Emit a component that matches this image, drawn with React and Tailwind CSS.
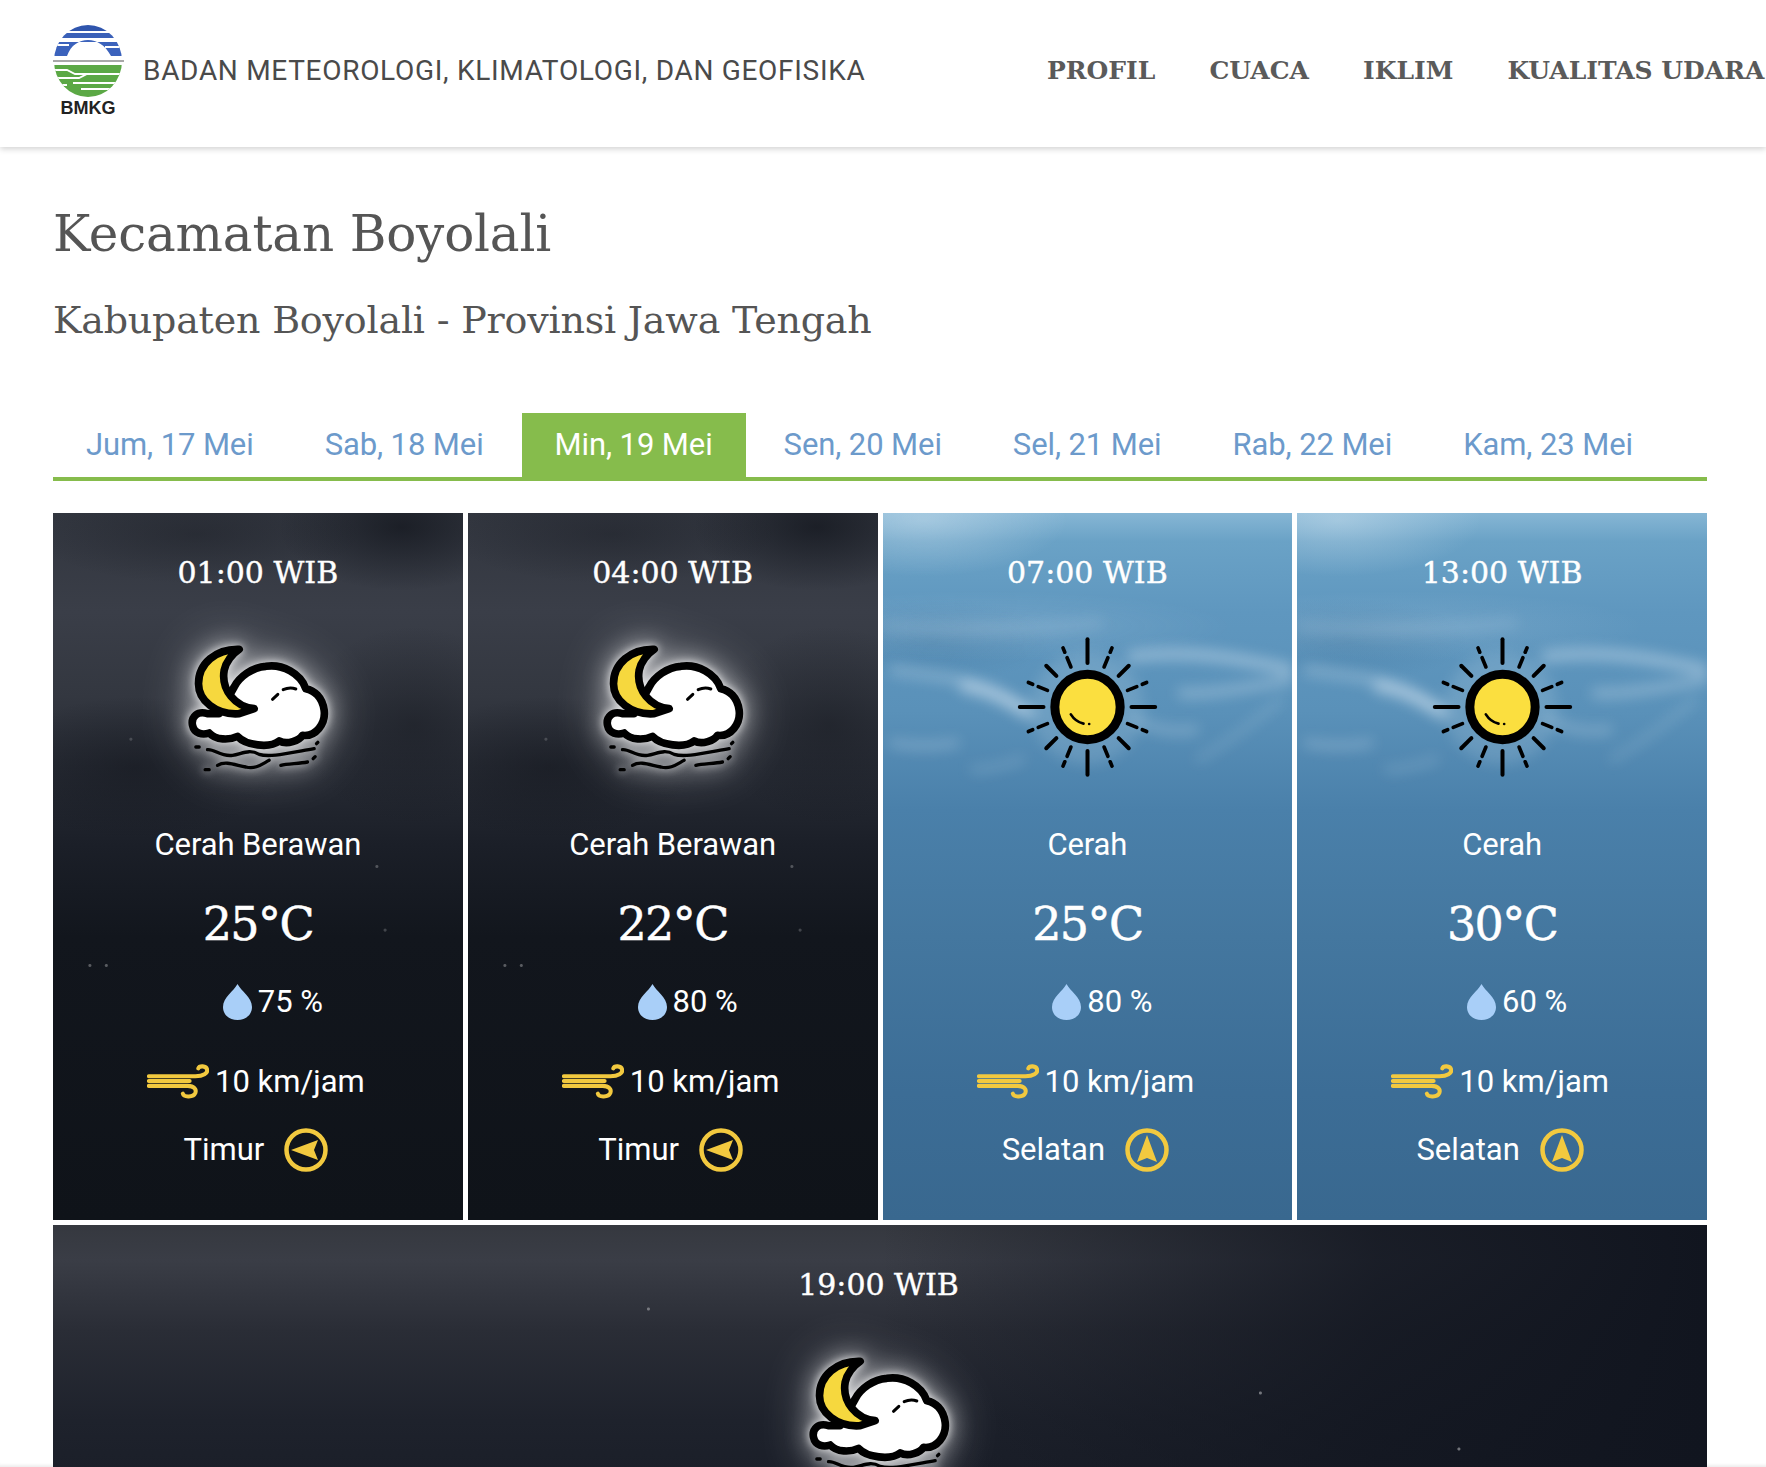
import React from 'react';

const slab = "font-['DejaVu_Serif',serif]";

const days = ['Jum, 17 Mei', 'Sab, 18 Mei', 'Min, 19 Mei', 'Sen, 20 Mei', 'Sel, 21 Mei', 'Rab, 22 Mei', 'Kam, 23 Mei'];

const forecasts = [
  { time: '01:00 WIB', night: true, label: 'Cerah Berawan', temp: '25°C', hum: '75 %', dir: 'Timur' },
  { time: '04:00 WIB', night: true, label: 'Cerah Berawan', temp: '22°C', hum: '80 %', dir: 'Timur' },
  { time: '07:00 WIB', night: false, label: 'Cerah', temp: '25°C', hum: '80 %', dir: 'Selatan' },
  { time: '13:00 WIB', night: false, label: 'Cerah', temp: '30°C', hum: '60 %', dir: 'Selatan' },
];

const nightBg =
  'bg-[radial-gradient(ellipse_30%_9%_at_85%_2%,rgba(12,15,22,0.6),transparent),radial-gradient(ellipse_40%_7%_at_35%_3%,rgba(20,23,30,0.35),transparent),radial-gradient(ellipse_28%_14%_at_88%_30%,rgba(20,23,30,0.45),transparent),radial-gradient(ellipse_35%_10%_at_20%_36%,rgba(18,21,28,0.5),transparent),radial-gradient(circle_at_9%_64%,rgba(255,255,255,0.3)_1px,transparent_2px),radial-gradient(circle_at_13%_64%,rgba(255,255,255,0.3)_1px,transparent_2px),radial-gradient(circle_at_79%_50%,rgba(255,255,255,0.25)_1px,transparent_2px),radial-gradient(circle_at_81%_59%,rgba(255,255,255,0.2)_1px,transparent_2px),radial-gradient(circle_at_19%_32%,rgba(255,255,255,0.25)_1px,transparent_2px),linear-gradient(180deg,#32363f_0%,#3a3e48_14%,#333740_26%,#272b34_36%,#1b1f28_47%,#12161d_60%,#0f1319_100%)]';
const dayBg =
  'bg-[radial-gradient(ellipse_35%_8%_at_10%_1%,rgba(220,235,245,0.4),transparent),radial-gradient(ellipse_60%_5%_at_25%_16%,rgba(220,235,245,0.14),transparent),radial-gradient(ellipse_30%_6%_at_12%_18%,rgba(40,90,130,0.2),transparent),linear-gradient(180deg,#86b6d4_0%,#6aa2c6_4%,#5f97bf_14%,#5a91b9_28%,#4a80aa_42%,#44779f_60%,#3c6d96_82%,#39688f_100%)]';

function Logo() {
  return (
    <svg viewBox="0 0 72 96" className="w-[72px] h-[96px] shrink-0">
      <defs>
        <clipPath id="globe">
          <ellipse cx="35" cy="38" rx="34" ry="36" />
        </clipPath>
      </defs>
      <g clipPath="url(#globe)">
        <rect x="0" y="2" width="72" height="6" fill="#2f55ad" />
        <rect x="0" y="10" width="72" height="5" fill="#3a60b8" />
        <path d="M0 19h72v14H58C52 22 44 17 35 17S18 22 14 33H0z" fill="#3b62bc" />
        <rect x="0" y="21" width="16" height="2" fill="#fff" />
        <rect x="52" y="23" width="20" height="2" fill="#fff" />
        <rect x="0" y="42" width="72" height="32" fill="#5ba845" />
        <path d="M0 47h14l8 4h50M0 55h26l8-4M20 60h52M28 66h44M0 62h14" stroke="#fff" strokeWidth="1.8" fill="none" />
      </g>
      <rect x="0" y="37" width="71" height="2" fill="#a8a8a8" />
      <text x="35" y="91" textAnchor="middle" fontFamily="Liberation Sans, sans-serif" fontWeight="700" fontSize="18" fill="#222">BMKG</text>
    </svg>
  );
}

// cirrus streaks behind the sun
function Wisps() {
  return (
    <svg viewBox="0 0 1236 1080" preserveAspectRatio="none" className="absolute left-0 top-0 w-full h-[360px] [filter:blur(7px)]" fill="none" stroke="#e4f0f8" strokeLinecap="round">
      <path d="M30 470C150 490 300 490 420 590" strokeWidth="26" opacity="0.32" />
      <path d="M250 520C320 530 380 560 440 600" strokeWidth="40" opacity="0.45" />
      <path d="M750 430C900 410 1050 430 1230 470" strokeWidth="30" opacity="0.45" />
      <path d="M900 540C1000 545 1120 520 1230 500" strokeWidth="24" opacity="0.38" />
      <path d="M950 740C1050 680 1130 620 1200 560" strokeWidth="16" opacity="0.22" />
      <path d="M760 620C820 650 880 660 940 650" strokeWidth="28" opacity="0.25" />
      <path d="M30 690C90 700 160 700 220 690" strokeWidth="22" opacity="0.3" />
      <path d="M270 770C320 770 370 755 420 740" strokeWidth="16" opacity="0.25" />
      <path d="M0 340C200 360 450 350 650 330" strokeWidth="36" opacity="0.12" />
      <circle cx="616" cy="585" r="170" fill="#e4f0f8" stroke="none" opacity="0.14" />
    </svg>
  );
}

function MoonCloud() {
  return (
    <svg viewBox="420 410 470 420" className="w-[157px] h-[140px] [filter:drop-shadow(0_0_4px_rgba(255,255,255,0.8))_drop-shadow(0_0_12px_rgba(255,255,255,0.55))_drop-shadow(0_0_24px_rgba(255,255,255,0.35))]">
      <path
        d="M505 640C475 630 455 650 460 675C465 700 490 705 510 698C530 720 570 720 595 708C620 735 690 745 720 722C745 735 780 720 790 705C830 710 860 670 855 630C850 590 825 570 800 565C785 520 730 490 680 498C640 500 600 530 585 560L540 640Z"
        fill="#fff"
        stroke="#000"
        strokeWidth="23"
        strokeLinejoin="round"
      />
      <path
        d="M600 447C530 445 478 490 478 550C478 600 530 645 600 640L645 625C590 620 545 570 555 510C560 485 580 460 600 447Z"
        fill="#f6d83e"
        stroke="#000"
        strokeWidth="23"
        strokeLinejoin="round"
      />
      <path d="M700 597L716 582M732 568C745 562 760 562 770 566" fill="none" stroke="#000" strokeWidth="9" strokeLinecap="round" />
      <g fill="none" stroke="#000" strokeWidth="10" strokeLinecap="round">
        <path d="M505 748C525 745 545 770 580 765C610 760 630 745 660 762C690 772 740 760 825 745" />
        <path d="M535 795C560 780 590 795 620 800C650 808 670 790 690 780M725 795C745 790 780 790 805 785" />
        <path d="M470 740h10M498 808h12M822 775l6-6M832 730l4-4" />
      </g>
    </svg>
  );
}

function Sun() {
  const rays = [];
  for (let i = 0; i < 16; i++) {
    const a = (i * Math.PI) / 8;
    const c = Math.cos(a);
    const s = Math.sin(a);
    const seg = (r1, r2, w) => (
      <line key={i + '-' + r1} x1={c * r1} y1={s * r1} x2={c * r2} y2={s * r2} stroke="#000" strokeWidth={w} strokeLinecap="round" />
    );
    if (i % 4 === 0) rays.push(seg(132, 203, 12));
    else if (i % 2 === 0) rays.push(seg(132, 175, 12));
    else {
      rays.push(seg(130, 160, 11));
      rays.push(seg(178, 192, 11));
    }
  }
  return (
    <svg viewBox="-235 -210 470 420" className="w-[157px] h-[140px]">
      {rays}
      <circle cx="0" cy="0" r="98" fill="#fbdf3f" stroke="#000" strokeWidth="27" />
      <path d="M-50 22C-40 38 -28 46 -12 50" fill="none" stroke="#000" strokeWidth="8" strokeLinecap="round" />
      <circle cx="5" cy="51" r="4" fill="#000" />
    </svg>
  );
}

function Drop() {
  return (
    <svg viewBox="0 0 29 36" className="w-[29px] h-[36px] shrink-0">
      <path d="M14.5 0C11 7 0 13 0 23C0 31 6.5 36 14.5 36S29 31 29 23C29 13 18 7 14.5 0Z" fill="#a9cff8" />
    </svg>
  );
}

function Wind() {
  return (
    <svg viewBox="0 0 64 36" className="w-[62px] h-[36px] shrink-0" fill="none" stroke="#f2c93f" strokeWidth="4.2" strokeLinecap="round">
      <path d="M2 12H50C58 12 63 9 62 5C61 1 54 1 53 4" />
      <path d="M2 17H44" />
      <path d="M2 22H42C49 22 51 26 50 29C48 34 38 34 37 30" />
    </svg>
  );
}

function Compass({ dir }) {
  return (
    <svg viewBox="0 0 44 44" className="w-[44px] h-[44px] shrink-0">
      <circle cx="22" cy="22" r="19.5" fill="none" stroke="#f2c93f" strokeWidth="4.5" />
      <path d="M22 7L32 34L22 30L12 34Z" fill="#f2c93f" transform={dir === 'Timur' ? 'rotate(-90 22 22)' : undefined} />
    </svg>
  );
}

function Card({ f }) {
  return (
    <div className={`relative h-[707px] overflow-hidden text-white ${f.night ? nightBg : dayBg}`}>
      {!f.night && <Wisps />}
      <div className="relative flex flex-col items-center">
        <div className={`${slab} text-[30px] [-webkit-text-stroke:0.4px_white] leading-[40px] mt-[40px] h-[84px]`}>{f.time}</div>
        <div className="h-[140px]">{f.night ? <MoonCloud /> : <Sun />}</div>
        <div className="text-[31px] tracking-[-0.1px] leading-[40px] mt-[48px]">{f.label}</div>
        <div className={`${slab} text-[46px] tracking-[-1.6px] [-webkit-text-stroke:0.5px_white] leading-[60px] mt-[29px]`}>{f.temp}</div>
        <div className="flex items-center gap-[6px] text-[31px] leading-[36px] mt-[30px] pl-[30px]">
          <Drop />
          <span>{f.hum}</span>
        </div>
        <div className="flex items-center gap-[6px] text-[31px] leading-[36px] mt-[44px] pr-[4px]">
          <Wind />
          <span>10 km/jam</span>
        </div>
        <div className="flex items-center gap-[20px] text-[31px] leading-[44px] mt-[28px] pr-[4px]">
          <span>{f.dir}</span>
          <Compass dir={f.dir} />
        </div>
      </div>
    </div>
  );
}

export default function App() {
  return (
    <div className="h-screen w-full overflow-hidden bg-white font-['Roboto',sans-serif] shadow-[inset_0_-4px_3px_-2px_#eeeeee]">
      {/* Header */}
      <header className="h-[147px] flex items-center pl-[53px] pb-[5px] bg-white shadow-[0_2px_6px_rgba(0,0,0,0.18)] whitespace-nowrap">
        <Logo />
        <div className="text-[28px] tracking-[0.7px] text-[#4a4a4a] ml-[18px] w-[904px] shrink-0">
          BADAN METEOROLOGI, KLIMATOLOGI, DAN GEOFISIKA
        </div>
        <nav className={`${slab} flex gap-[54px] font-bold text-[25px] text-[#5a5a5a]`}>
          <span>PROFIL</span>
          <span>CUACA</span>
          <span>IKLIM</span>
          <span>KUALITAS UDARA</span>
        </nav>
      </header>

      <main className="pl-[53px] pr-[59px]">
        <h1 className={`${slab} text-[50px] tracking-[-0.2px] text-[#555] leading-[60px] pt-[57px]`}>Kecamatan Boyolali</h1>
        <h2 className={`${slab} text-[38px] tracking-[-0.2px] text-[#555] leading-[46px] mt-[33px]`}>
          Kabupaten Boyolali - Provinsi Jawa Tengah
        </h2>

        {/* Tabs */}
        <div className="flex gap-[5px] mt-[70px] border-b-[4px] border-[#86bc4c] h-[68px]">
          {days.map((d, i) => (
            <div
              key={d}
              className={`px-[33px] h-[64px] leading-[63px] text-[31px] tracking-[-0.1px] ${i === 2 ? 'bg-[#86bc4c] text-white' : 'text-[#6c9acb]'}`}
            >
              {d}
            </div>
          ))}
        </div>

        {/* Forecast cards */}
        <div className="grid grid-cols-4 gap-[5px] mt-[32px]">
          {forecasts.map((f) => (
            <Card key={f.time} f={f} />
          ))}
          <div className="col-span-4 h-[700px] pr-[3px] flex flex-col items-center text-white bg-[radial-gradient(circle_at_36%_12%,rgba(255,255,255,0.35)_1px,transparent_2px),radial-gradient(circle_at_73%_24%,rgba(255,255,255,0.4)_1px,transparent_2px),radial-gradient(circle_at_85%_32%,rgba(255,255,255,0.4)_1px,transparent_2px),linear-gradient(90deg,transparent_0%,transparent_50%,rgba(18,22,32,0.8)_80%,#11151f_100%),linear-gradient(180deg,#35383f_0%,#3a3d46_5%,#2a2d36_15%,#1e222c_28%,#1b1f29_35%,#1b1f29_100%)]">
            <div className={`${slab} text-[30px] [-webkit-text-stroke:0.4px_white] leading-[40px] mt-[40px] h-[84px]`}>19:00 WIB</div>
            <MoonCloud />
          </div>
        </div>
      </main>
    </div>
  );
}
